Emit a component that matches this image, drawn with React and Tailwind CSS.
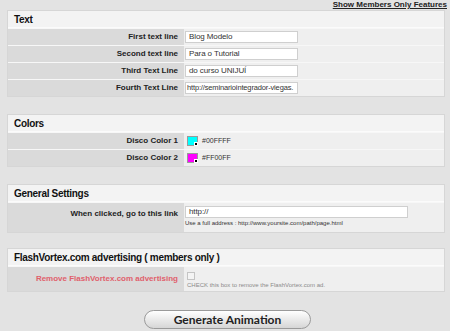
import React from "react";

const textRows = [
  ["First text line", "Blog Modelo", ""],
  ["Second text line", "Para o Tutorial", ""],
  ["Third Text Line", "do curso UNIJUÍ", ""],
  ["Fourth Text Line", "http://seminariointegrador-viegas.", "text-[7.5px] !px-[1px] tracking-[-0.15px]"],
];

const colorRows = [
  ["Disco Color 1", "#00FFFF", "bg-[#00ffff]"],
  ["Disco Color 2", "#FF00FF", "bg-[#ff00ff]"],
];

const Panel = ({ title, children }) => (
  <div className="ml-[7px] mr-[5px] border border-[#d6d6d6] bg-[#f7f7f7]">
    <div className="h-[17px] flex items-center pl-[6px] bg-[#f3f3f3] text-[10px] tracking-[-0.3px] font-bold text-[#111] border-b border-[#fbfbfb]">
      {title}
    </div>
    {children}
  </div>
);

const Row = ({ label, children, h = "h-[17px]", labelClass = "text-[#222]" }) => (
  <div className={`flex border-t border-[#f7f7f7] ${h}`}>
    <div className={`w-[176px] self-stretch flex justify-end pr-[6px] bg-[#dadada] text-[8px] font-bold ${labelClass}`}>
      {label}
    </div>
    <div className="flex-1 self-stretch bg-[#efefef] pl-[1px]">{children}</div>
  </div>
);

const Input = ({ value, w = "w-[113px]", extra = "text-[8px]" }) => (
  <div className={`${w} h-[12px] bg-white border border-[#cfcfcf] flex items-center px-[3px] tracking-[-0.1px] text-[#333] overflow-hidden whitespace-nowrap ${extra}`}>
    {value}
  </div>
);

export default function App() {
  return (
    <div
      className="w-[450px] h-[331px] bg-[#e3e3e3] overflow-hidden"
      style={{ fontFamily: '"Liberation Sans", Arial, sans-serif' }}
    >
      <div className="h-[10px] flex justify-end pr-[3px] items-start">
        <a className="text-[8px] font-bold text-[#222] underline leading-[9px]">Show Members Only Features</a>
      </div>

      <Panel title="Text">
        {textRows.map(([label, value, extra]) => (
          <Row key={label} label={<span className="self-center">{label}</span>}>
            <div className="h-full flex items-center">
              <Input value={value} extra={extra || "text-[8px]"} />
            </div>
          </Row>
        ))}
      </Panel>

      <div className="h-[17px]" />

      <Panel title="Colors">
        {colorRows.map(([label, hex, bg]) => (
          <Row key={label} label={<span className="self-center">{label}</span>}>
            <div className="h-full flex items-center gap-[4px] pl-[2px]">
              <div className={`relative w-[11px] h-[10px] border border-[#9a9a9a] ${bg}`}>
                <div className="absolute right-[-1px] bottom-[-1px] w-[4px] h-[4px] bg-black border border-white" />
              </div>
              <span className="text-[7px] text-[#333]">{hex}</span>
            </div>
          </Row>
        ))}
      </Panel>

      <div className="h-[17px]" />

      <Panel title="General Settings">
        <Row label={<span className="pt-[5px]">When clicked, go to this link</span>} h="h-[30px]">
          <div className="pt-[3px] flex flex-col">
            <Input value="http://" w="w-[223px]" />
            <span className="text-[6px] text-[#333] mt-[2px] leading-[7px]">
              Use a full address : http://www.yoursite.com/path/page.html
            </span>
          </div>
        </Row>
      </Panel>

      <div className="h-[15px]" />

      <Panel title="FlashVortex.com advertising ( members only )">
        <Row
          label={<span className="pt-[6px]">Remove FlashVortex.com advertising</span>}
          h="h-[25px]"
          labelClass="text-[#e0606c]"
        >
          <div className="pt-[5px] pl-[2px] flex flex-col">
            <div className="w-[8px] h-[8px] border border-[#c4c4c4] bg-[#f4f4f4]" />
            <span className="text-[6px] text-[#8a8a8a] mt-[2px] leading-[7px]">
              CHECK this box to remove the FlashVortex.com ad.
            </span>
          </div>
        </Row>
      </Panel>

      <div className="flex justify-center pt-[18px] pl-[5px]">
        <button
          className="w-[167px] h-[19px] rounded-full border border-[#9a9a9a] bg-gradient-to-b from-white to-[#d6d6d6] text-[12px] font-bold text-[#222] flex items-center justify-center"
          style={{ fontFamily: 'Lato, "Liberation Sans", sans-serif' }}
        >
          Generate Animation
        </button>
      </div>
    </div>
  );
}
